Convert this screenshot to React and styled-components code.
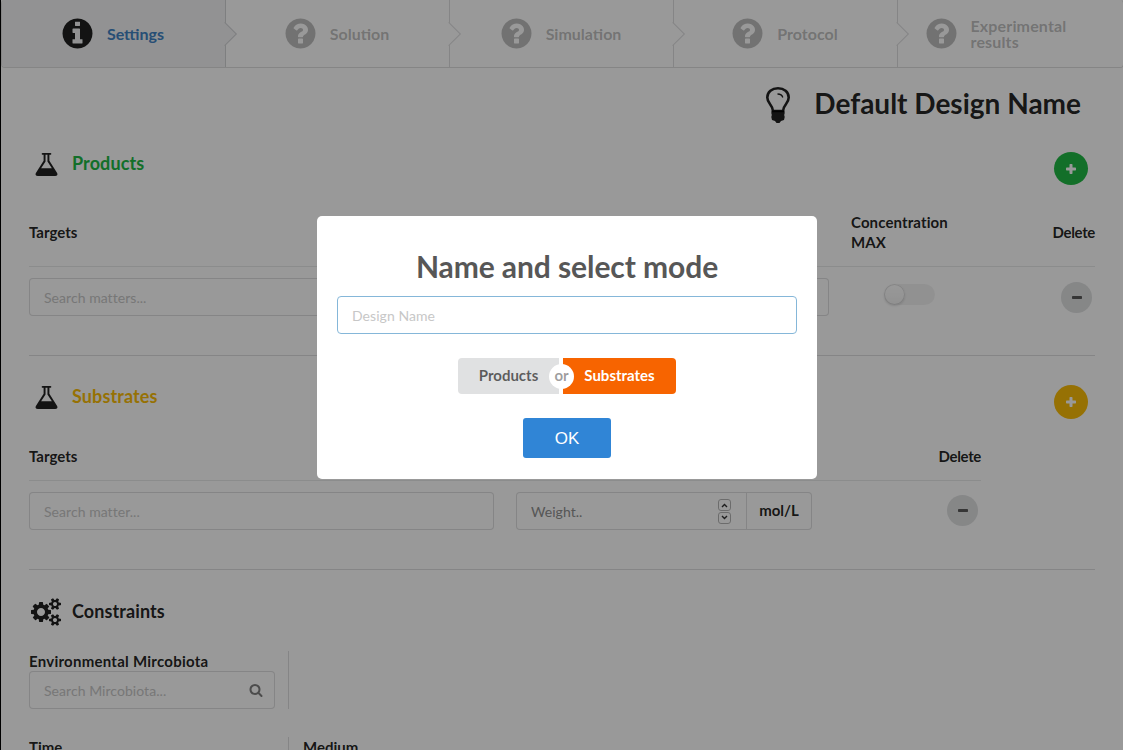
import React from "react";
import styled, { createGlobalStyle } from "styled-components";

const GlobalStyle = createGlobalStyle`
  * { box-sizing: border-box; }
  body { margin: 0; background: #000; overflow: hidden; }
  input, button { font-family: inherit; margin: 0; }
`;

const line = "rgba(34, 36, 38, 0.15)";

const Shell = styled.div`
  position: relative;
  height: 750px;
  padding-left: 1px;
  overflow: hidden;
  font-family: Lato, sans-serif;
  font-size: 14px;
  color: rgba(0, 0, 0, 0.87);
`;
const Page = styled.main`
  height: 750px;
  background: #fff;
  overflow: hidden;
`;
const Steps = styled.nav`
  display: flex;
  width: 1123px;
  height: 68px;
  border: 1px solid ${line};
  border-top: 0;
  border-radius: 4px;
  overflow: hidden;
`;
const Step = styled.div`
  position: relative;
  flex: 0 0 224px;
  display: flex;
  align-items: center;
  justify-content: center;
  gap: 12px;
  padding-right: 3px;
  border-right: ${(p) => (p.$last ? 0 : `1px solid ${line}`)};
  background: ${(p) => (p.$active ? "#f3f4f5" : "#fff")};
  color: ${(p) => (p.$active ? "#4183c4" : "rgba(40, 40, 40, 0.3)")};
  z-index: ${(p) => p.$z};
  &::after {
    content: "";
    display: ${(p) => (p.$last ? "none" : "block")};
    position: absolute;
    top: 34px;
    right: 0;
    width: 16px;
    height: 16px;
    border: solid ${line};
    border-width: 0 1px 1px 0;
    background: ${(p) => (p.$active ? "#f3f4f5" : "#fff")};
    transform: translate(50%, -50%) rotate(-45deg);
  }
`;
const StepIcon = styled.span`
  display: flex;
  color: ${(p) => (p.$active ? "rgba(0, 0, 0, 0.87)" : "rgba(40, 40, 40, 0.3)")};
`;
const StepTitle = styled.span`
  font-size: 16px;
  line-height: 16px;
  font-weight: 700;
  width: ${(p) => (p.$wrap ? "123px" : "auto")};
  letter-spacing: ${(p) => (p.$wrap ? "0.15px" : "0")};
`;
const Content = styled.div`
  padding: 0 28px;
  width: 1122px;
`;
const DesignTitle = styled.h1`
  display: flex;
  align-items: center;
  justify-content: flex-end;
  gap: 23px;
  height: 72px;
  margin: 0;
  padding: 0 14px 2px 0;
  font-size: 28px;
  font-weight: 700;
  svg { margin-top: 4px; }
`;
const SectionHead = styled.header`
  display: flex;
  justify-content: space-between;
  align-items: center;
  height: ${(p) => p.$h}px;
  margin-top: ${(p) => p.$top}px;
  padding-right: 7px;
`;
const SectionTitle = styled.h2`
  display: flex;
  align-items: center;
  margin: 0;
  padding-bottom: ${(p) => p.$lift}px;
  font-size: 18px;
  line-height: 24px;
  font-weight: 700;
  letter-spacing: 0.1px;
  color: ${(p) => p.$color};
`;
const SectionIcon = styled.span`
  display: flex;
  justify-content: center;
  width: 34px;
  margin: 3px 9px 0 0;
  color: rgba(0, 0, 0, 0.87);
`;
const RoundButton = styled.button`
  display: flex;
  align-items: center;
  justify-content: center;
  width: ${(p) => p.$size}px;
  height: ${(p) => p.$h || p.$size}px;
  padding: 0;
  border: 0;
  border-radius: 50%;
  background: ${(p) => p.$color};
  color: ${(p) => (p.$dark ? "rgba(0,0,0,.6)" : "#fff")};
`;
const Row = styled.div`
  display: grid;
  grid-template-columns: ${(p) => p.$cols};
  align-items: ${(p) => p.$align || "start"};
  width: ${(p) => p.$w}px;
  height: ${(p) => p.$h}px;
  padding-top: ${(p) => p.$pad || 0}px;
  border-bottom: ${(p) => (p.$line ? "1px solid rgba(34,36,38,.1)" : "0")};
`;
const DeleteCell = styled.div`
  padding-top: ${(p) => p.$top}px;
`;
const Label = styled.span`
  font-size: 15px;
  font-weight: 700;
  line-height: 20px;
  letter-spacing: ${(p) => p.$ls || 0}px;
  white-space: pre-line;
  justify-self: ${(p) => (p.$end ? "end" : "start")};
`;
const Field = styled.div`
  display: flex;
  align-items: center;
  width: ${(p) => p.$w}px;
  height: 38px;
  border: 1px solid ${(p) => (p.$focus ? "#85b7d9" : line)};
  border-radius: 4px;
  background: #fff;
  overflow: hidden;
`;
const Input = styled.input`
  flex: 1;
  min-width: 0;
  height: 36px;
  padding: 0 14px;
  border: 0;
  outline: 0;
  background: transparent;
  font-size: 14px;
  letter-spacing: 0.05px;
  &::placeholder { color: ${(p) => (p.$dark ? "#8f8f8f" : "#c7c7c7")}; opacity: 1; }
`;
const FieldIcon = styled.span`
  display: flex;
  padding-right: 11px;
  color: rgba(0, 0, 0, 0.5);
`;
const Spinner = styled.span`
  display: flex;
  flex-direction: column;
  gap: 1px;
  margin-right: 15px;
`;
const Unit = styled.span`
  display: flex;
  align-items: center;
  justify-content: center;
  width: 65px;
  height: 38px;
  padding-bottom: 2px;
  border-left: 1px solid ${line};
  font-weight: 700;
  font-size: 15px;
`;
const Toggle = styled.span`
  width: 51px;
  height: 21px;
  margin: 6px 0 0 32px;
  border-radius: 11px;
  background: rgba(0, 0, 0, 0.05);
  &::before {
    content: "";
    display: block;
    width: 21px;
    height: 21px;
    border-radius: 50%;
    background: linear-gradient(transparent, rgba(0, 0, 0, 0.05)) #fff;
    box-shadow: 0 1px 2px rgba(34, 36, 38, 0.15), 0 0 0 1px ${line} inset;
  }
`;
const Divider = styled.div`
  height: 1px;
  background: ${line};
`;
const Constraints = styled.div`
  display: grid;
  grid-template-columns: 259px 1fr;
  margin-bottom: 28px;
`;
const Constraint = styled.div`
  display: flex;
  flex-direction: column;
  height: 58px;
  padding-left: ${(p) => (p.$ruled ? 14 : 0)}px;
  border-left: ${(p) => (p.$ruled ? `1px solid ${line}` : "0")};
`;
const Backdrop = styled.div`
  position: absolute;
  inset: 0;
  z-index: 20;
  display: flex;
  justify-content: center;
  align-items: flex-start;
  padding: 216px 0 0 11px;
  background: rgba(0, 0, 0, 0.4);
`;
const Modal = styled.section`
  display: flex;
  flex-direction: column;
  align-items: center;
  width: 500px;
  height: 263px;
  padding: 30px 20px 0;
  border-radius: 5px;
  background: #fff;
`;
const ModalTitle = styled.h2`
  margin: 0 0 10px;
  color: #575757;
  font-size: 30px;
  line-height: 40px;
  font-weight: 700;
  letter-spacing: -0.08px;
`;
const ModeSwitch = styled.div`
  position: relative;
  display: flex;
  gap: 4px;
  margin: 24px 0;
`;
const ModeButton = styled.button`
  width: ${(p) => p.$w}px;
  height: 36px;
  padding: 0 0 2px;
  border: 0;
  border-radius: ${(p) => (p.$on ? "0 4px 4px 0" : "4px 0 0 4px")};
  background: ${(p) => (p.$on ? "#f76400" : "#e0e1e2")};
  color: ${(p) => (p.$on ? "#fff" : "rgba(0,0,0,.6)")};
  font-size: 15px;
  font-weight: 700;
`;
const Or = styled.span`
  position: absolute;
  left: 91px;
  top: 6px;
  width: 25px;
  height: 25px;
  border-radius: 50%;
  background: #fff;
  color: rgba(0, 0, 0, 0.4);
  font-weight: 700;
  font-size: 15px;
  line-height: 23px;
  text-align: center;
`;
const OkButton = styled.button`
  width: 88px;
  height: 40px;
  padding: 2px 0 0;
  border: 0;
  border-radius: 3px;
  background: #3085d6;
  color: #fff;
  font: 17px "Liberation Sans", sans-serif;
`;

const disc =
  "M1664 896q0 209-103 385.5t-279.5 279.5-385.5 103-385.5-103-279.5-279.5-103-385.5 103-385.5 279.5-279.5 385.5-103 385.5 103 279.5 279.5 103 385.5z";
const smallCog =
  "v140q0 16-149 31-12 27-30 52 51 113 51 138 0 4-4 7-122 71-124 71-8 0-46-47t-52-68q-20 2-30 2t-30-2q-14 21-52 68t-46 47q-2 0-124-71-4-3-4-7 0-25 51-138-18-25-30-52-149-15-149-31v-140q0-16 149-31 13-29 30-52-51-113-51-138 0-4 4-7 4-2 35-20t59-34 30-16q8 0 46 46.5t52 67.5q20-2 30-2t30 2q51-71 92-112l6-2q4 0 124 70 4 3 4 7 0 25-51 138 17 23 30 52 149 15 149 31z";
const paths = {
  question:
    "M1024 1376v-192q0-14-9-23t-23-9h-192q-14 0-23 9t-9 23v192q0 14 9 23t23 9h192q14 0 23-9t9-23zm256-672q0-88-55.5-163t-138.5-116-170-41q-243 0-371 213-15 24 8 42l132 100q7 6 19 6 16 0 25-12 53-68 86-92 34-24 86-24 48 0 85.5 26t37.5 59q0 38-20 61t-68 45q-63 28-115.5 86.5t-52.5 125.5v36q0 14 9 23t23 9h192q14 0 23-9t9-23q0-19 21.5-49.5t54.5-49.5q32-18 49-28.5t46-35 44.5-48 28-60.5 12.5-81z" + disc,
  info:
    "M1152 1376v-160q0-14-9-23t-23-9h-96v-512q0-14-9-23t-23-9h-320q-14 0-23 9t-9 23v160q0 14 9 23t23 9h96v320h-96q-14 0-23 9t-9 23v160q0 14 9 23t23 9h448q14 0 23-9t9-23zm-128-896v-160q0-14-9-23t-23-9h-192q-14 0-23 9t-9 23v160q0 14 9 23t23 9h192q14 0 23-9t9-23z" + disc,
  flask:
    "M1591 1448q56 89 21.5 152.5t-140.5 63.5h-1152q-106 0-140.5-63.5t21.5-152.5l503-793v-399h-64q-26 0-45-19t-19-45 19-45 45-19h512q26 0 45 19t19 45-19 45-45 19h-64v399zm-779-725l-272 429h712l-272-429-20-31v-436h-128v436z",
  search:
    "M1216 832q0-185-131.5-316.5t-316.5-131.5-316.5 131.5-131.5 316.5 131.5 316.5 316.5 131.5 316.5-131.5 131.5-316.5zm512 832q0 52-38 90t-90 38q-54 0-90-38l-343-342q-179 124-399 124-143 0-273.5-55.5t-225-150-150-225-55.5-273.5 55.5-273.5 150-225 225-150 273.5-55.5 273.5 55.5 225 150 150 225 55.5 273.5q0 220-124 399l343 343q37 37 37 90z",
  cogs:
    "M896 896q0-106-75-181t-181-75-181 75-75 181 75 181 181 75 181-75 75-181zm768 512q0-52-38-90t-90-38-90 38-38 90q0 53 37.5 90.5t90.5 37.5 90.5-37.5 37.5-90.5zm0-1024q0-52-38-90t-90-38-90 38-38 90q0 53 37.5 90.5t90.5 37.5 90.5-37.5 37.5-90.5zm-384 421v185q0 10-7 19.5t-16 10.5l-155 24q-11 35-32 76 34 48 90 115 7 11 7 20 0 12-7 19-23 30-82.5 89.5t-78.5 59.5q-11 0-21-7l-115-90q-37 19-77 31-11 108-23 155-7 24-30 24h-186q-11 0-20-7.5t-10-17.5l-23-153q-34-10-75-31l-118 89q-7 7-20 7-11 0-21-8-144-133-144-160 0-9 7-19 10-14 41-53t47-61q-23-44-35-82l-152-24q-10-1-17-9.5t-7-19.5v-185q0-10 7-19.5t16-10.5l155-24q11-35 32-76-34-48-90-115-7-11-7-20 0-12 7-20 22-30 82-89t79-59q11 0 21 7l115 90q34-18 77-32 11-108 23-154 7-24 30-24h186q11 0 20 7.5t10 17.5l23 153q34 10 75 31l118-89q8-7 20-7 11 0 21 8 144 133 144 160 0 8-7 19-12 16-42 54t-45 60q23 48 34 82l152 23q10 2 17 10.5t7 19.5zM1920 1338" +
    smallCog + "M1920 314" + smallCog,
};

const Icon = ({ name, size, wide }) => (
  <svg width={wide ? (size * 1920) / 1792 : size} height={size} viewBox={`0 0 ${wide ? 1920 : 1792} 1792`} fill="currentColor" fillRule="evenodd">
    <path d={paths[name]} />
  </svg>
);
const Bulb = () => (
  <svg width="26" height="38" viewBox="0 0 26 38" fill="none" stroke="currentColor">
    <path strokeWidth="2.6" d="M8 25C8 19 2.3 18 2.3 11.5C2.3 6 7 2.3 13 2.3S23.7 6 23.7 11.5C23.7 18 18 19 18 25Z" />
    <path strokeWidth="1.3" d="M12.5 8Q17 8 17.800 11.500" />
    <path fill="currentColor" stroke="none" d="M6.800 24.500H19.200L19.700 27L19.200 29L19.700 31L19 34L16 35L14.500 37H11.500L10 35L7 34L6.300 31L6.800 29L6.300 27Z" />
  </svg>
);
const Sign = ({ plus }) => (
  <svg width="10" height="10" viewBox="0 0 10 10" fill="currentColor">
    <rect y={plus ? 3.5 : 3} width="10" height="3" rx=".7" />
    {plus && <rect x="3.5" width="3" height="10" rx=".7" />}
  </svg>
);
const Chevron = ({ down }) => (
  <svg width="13" height="12" viewBox="0 0 13 12" fill="none">
    <rect x=".5" y=".5" width="12" height="11" rx="2.5" stroke="#b5b5b5" />
    <path d={down ? "M4 4L6.5 6.5L9 4" : "M4 8L6.5 5.5L9 8"} stroke="#333" strokeWidth="1.4" />
  </svg>
);

const steps = ["Settings", "Solution", "Simulation", "Protocol", "Experimental results"];

export default function App() {
  return (
    <Shell>
      <GlobalStyle />
      <Page>
        <Steps>
          {steps.map((title, i) => (
            <Step key={title} $active={i === 0} $last={i === 4} $z={5 - i}>
              <StepIcon $active={i === 0}><Icon name={i === 0 ? "info" : "question"} size={35} /></StepIcon>
              <StepTitle $wrap={i === 4}>{title}</StepTitle>
            </Step>
          ))}
        </Steps>
        <Content>
          <DesignTitle><Bulb />Default Design Name</DesignTitle>

          <SectionHead $h={57} $top={0}>
            <SectionTitle $color="#21ba45" $lift={11}>
              <SectionIcon><Icon name="flask" size={27} /></SectionIcon>Products
            </SectionTitle>
            <RoundButton $size={34} $h={33} $color="#21ba45"><Sign plus /></RoundButton>
          </SectionHead>
          <Row $cols="822px 1fr 60px" $align="center" $w={1066} $h={70} $line>
            <Label>Targets</Label>
            <Label $ls={0.12}>{"Concentration\nMAX"}</Label>
            <Label $end $ls={-0.35}>Delete</Label>
          </Row>
          <Row $cols="823px 1fr 34px" $w={1066} $h={88} $pad={11}>
            <Field $w={800}><Input placeholder="Search matters..." /></Field>
            <Toggle />
            <DeleteCell $top={4}><RoundButton $size={31} $color="#e0e1e2" $dark><Sign /></RoundButton></DeleteCell>
          </Row>
          <Divider />

          <SectionHead $h={58} $top={17}>
            <SectionTitle $color="#fbbd08" $lift={12}>
              <SectionIcon><Icon name="flask" size={27} /></SectionIcon>Substrates
            </SectionTitle>
            <RoundButton $size={34} $color="#fbbd08"><Sign plus /></RoundButton>
          </SectionHead>
          <Row $cols="1fr 60px" $align="center" $w={952} $h={50} $line>
            <Label>Targets</Label>
            <Label $end $ls={-0.35}>Delete</Label>
          </Row>
          <Row $cols="487px 1fr 34px" $w={952} $h={88} $pad={11}>
            <Field $w={465}><Input placeholder="Search matter..." /></Field>
            <Field $w={296}>
              <Input placeholder="Weight.." $dark />
              <Spinner><Chevron /><Chevron down /></Spinner>
              <Unit>mol/L</Unit>
            </Field>
            <DeleteCell $top={3}><RoundButton $size={31} $color="#e0e1e2" $dark><Sign /></RoundButton></DeleteCell>
          </Row>
          <Divider />

          <SectionHead $h={60} $top={21}>
            <SectionTitle $color="rgba(0,0,0,.87)" $lift={21}>
              <SectionIcon><Icon name="cogs" size={28} wide /></SectionIcon>Constraints
            </SectionTitle>
          </SectionHead>
          <Constraints>
            <Constraint>
              <Label $ls={0.25}>Environmental Mircobiota</Label>
              <Field $w={246}>
                <Input placeholder="Search Mircobiota..." />
                <FieldIcon><Icon name="search" size={14} /></FieldIcon>
              </Field>
            </Constraint>
            <Constraint $ruled />
          </Constraints>
          <Constraints>
            <Constraint><Label>Time</Label></Constraint>
            <Constraint $ruled><Label>Medium</Label></Constraint>
          </Constraints>
        </Content>
      </Page>
      <Backdrop>
        <Modal>
          <ModalTitle>Name and select mode</ModalTitle>
          <Field $w={460} $focus><Input placeholder="Design Name" /></Field>
          <ModeSwitch>
            <ModeButton $w={101}>Products</ModeButton>
            <ModeButton $w={113} $on>Substrates</ModeButton>
            <Or>or</Or>
          </ModeSwitch>
          <OkButton>OK</OkButton>
        </Modal>
      </Backdrop>
    </Shell>
  );
}
